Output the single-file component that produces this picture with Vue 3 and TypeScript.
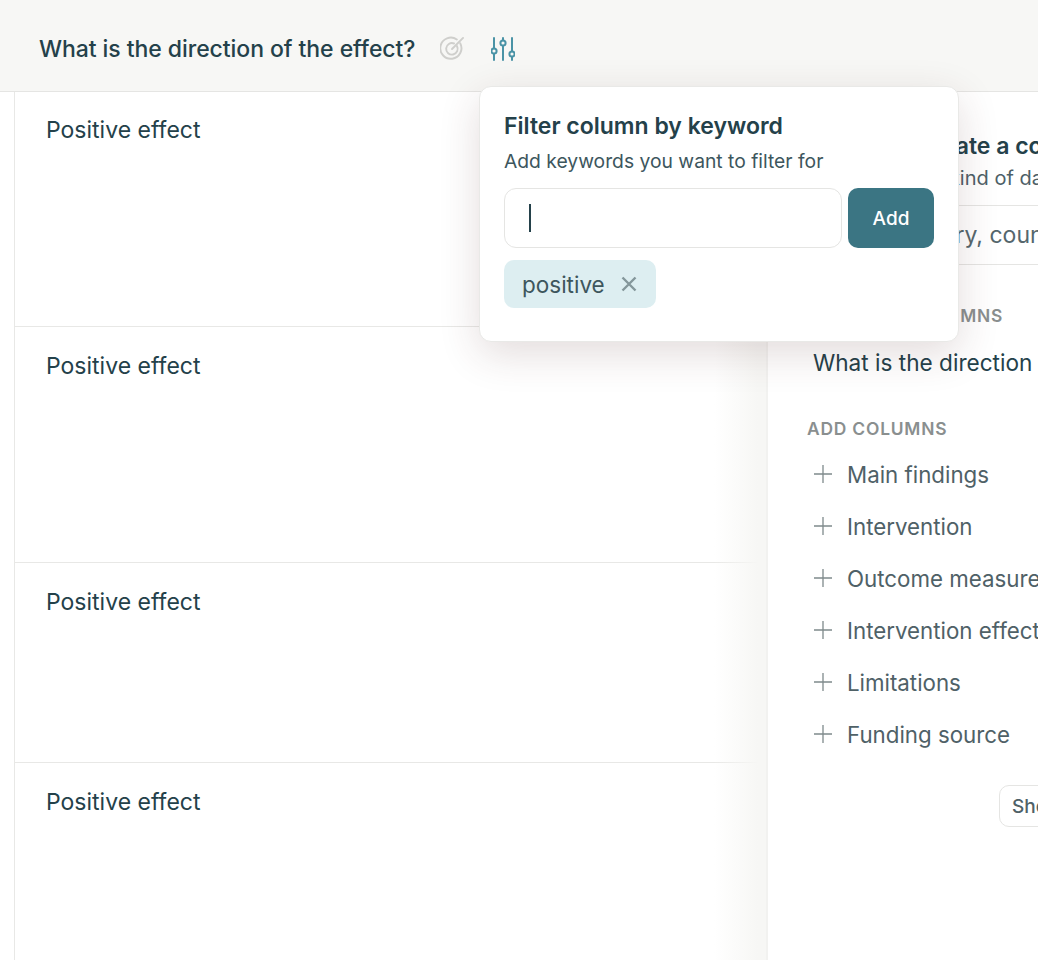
<script setup lang="ts">
const rows = [
  { id: 1, text: 'Positive effect', height: 235 },
  { id: 2, text: 'Positive effect', height: 236 },
  { id: 3, text: 'Positive effect', height: 200 },
  { id: 4, text: 'Positive effect', height: 198 }
]

const addColumns = [
  'Main findings',
  'Intervention',
  'Outcome measured',
  'Intervention effects',
  'Limitations',
  'Funding source'
]
</script>

<template>
  <div class="page">
    <header class="top">
      <span class="top-title">What is the direction of the effect?</span>
      <svg class="icon-target" viewBox="0 0 26 26" fill="none" stroke="#cfcfcc" stroke-width="2" stroke-linecap="round">
        <path d="M21 7.5A11 11 0 1 1 17.5 3.6" />
        <path d="M17.6 10.4a6 6 0 1 1-3-2.6" />
        <path d="M12.5 13.5 24 2" />
      </svg>
      <svg class="icon-sliders" viewBox="0 0 24 24" fill="none" stroke="#4a93a6" stroke-width="2" stroke-linecap="round">
        <path d="M3 1v10M3 17v6M12 1v2M12 9v14M21 1v13M21 20v3" />
        <circle cx="3" cy="14" r="2.6" />
        <circle cx="12" cy="6" r="2.6" />
        <circle cx="21" cy="17" r="2.6" />
      </svg>
    </header>

    <div class="body">
      <section class="table">
        <div v-for="row in rows" :key="row.id" class="cell" :style="{ height: row.height + 'px' }">
          {{ row.text }}
        </div>
      </section>

      <aside class="panel">
        <h3 class="panel-title">Search or create a column</h3>
        <p class="panel-sub">Describe what kind of data</p>
        <div class="panel-input">Study summary, country</div>
        <div class="label active-label">SELECTED COLUMNS</div>
        <div class="active-item">What is the direction of the effect?</div>
        <div class="label add-label">ADD COLUMNS</div>
        <ul class="add-list">
          <li v-for="col in addColumns" :key="col">
            <svg class="plus" viewBox="0 0 18 18" fill="none" stroke="#7f8a8c" stroke-width="1.3">
              <path d="M9 0v18M0 9h18" />
            </svg>
            {{ col }}
          </li>
        </ul>
        <div class="show-row">
          <button class="show-btn">Show more</button>
        </div>
      </aside>
    </div>

    <div class="popover">
      <h4 class="pop-title">Filter column by keyword</h4>
      <p class="pop-sub">Add keywords you want to filter for</p>
      <div class="pop-form">
        <div class="pop-input"><span class="caret"></span></div>
        <button class="pop-add">Add</button>
      </div>
      <div class="chip">
        <span class="chip-text">positive</span>
        <svg class="chip-x" viewBox="0 0 16 16" fill="none" stroke="#84979b" stroke-width="2.4">
          <path d="M1.5 1.5l13 13M14.5 1.5l-13 13" />
        </svg>
      </div>
    </div>
  </div>
</template>

<style scoped>
.page {
  position: relative;
  width: 1038px;
  height: 960px;
  overflow: hidden;
  background: #fff;
  font-family: Inter, 'Liberation Sans', sans-serif;
  color: #24414a;
}

.top {
  display: flex;
  align-items: center;
  height: 92px;
  padding: 6px 0 0 39px;
  box-sizing: border-box;
  background: #f7f7f5;
  border-bottom: 1px solid #e5e5e3;
}

.top-title {
  font-size: 23px;
  font-weight: 500;
  letter-spacing: -0.06px;
  margin-right: 25px;
}

.icon-target {
  width: 25px;
  height: 25px;
  margin-right: 26px;
}

.icon-sliders {
  width: 24px;
  height: 24px;
}

.body {
  display: flex;
}

.table {
  width: 767px;
  flex-shrink: 0;
  padding-left: 14px;
  box-sizing: border-box;
}

.cell {
  box-sizing: border-box;
  border-left: 1px solid #e8e8e6;
  border-bottom: 1px solid #e8e8e6;
  padding: 25px 0 0 31px;
  font-size: 23px;
  line-height: 28px;
}

.cell:first-child {
  padding-top: 24px;
}

.panel {
  flex: 1;
  min-width: 0;
  position: relative;
  height: 868px;
  padding: 40px 0 0 39px;
  box-sizing: border-box;
  white-space: nowrap;
  background: #fff;
  border-left: 2px solid #f2f2f0;
  margin-left: -1px;
}

/* soft fade over the table, next to the panel */
.panel::before {
  content: '';
  position: absolute;
  top: 0;
  bottom: 0;
  left: -54px;
  width: 52px;
  background: linear-gradient(to right, rgba(247, 247, 245, 0), #f7f7f5 85%);
}

.panel-title {
  margin: 0;
  font-size: 23px;
  line-height: 28px;
  font-weight: 600;
}

.panel-sub {
  margin: 4px 0 0;
  font-size: 20px;
  line-height: 28px;
  color: #4d6067;
}

.panel-input {
  margin-top: 13px;
  height: 60px;
  line-height: 58px;
  box-sizing: border-box;
  border-top: 1px solid #e5e5e3;
  border-bottom: 1px solid #e5e5e3;
  font-size: 23px;
  color: #55676d;
}

.label {
  font-size: 17.4px;
  line-height: 22px;
  font-weight: 600;
  letter-spacing: 0.8px;
  color: #8a8f8f;
}

.active-label {
  margin-top: 40px;
}

.active-item {
  margin: 22px 0 0 6px;
  font-size: 22.6px;
  line-height: 28px;
}

.add-label {
  margin-top: 41px;
}

.add-list {
  list-style: none;
  margin: 8px 0 0;
  padding: 0;
}

.add-list li {
  display: flex;
  align-items: center;
  height: 52px;
  font-size: 22.3px;
  color: #4f6167;
  padding-left: 7px;
}

.plus {
  width: 18px;
  height: 18px;
  margin: -1px 15px 0 0;
  flex-shrink: 0;
}

.show-row {
  margin: 25px 0 0 192px;
}

.show-btn {
  height: 42px;
  padding: 0 12px;
  background: #fff;
  border: 1px solid #e5e5e3;
  border-radius: 10px;
  font: 500 19px Inter, 'Liberation Sans', sans-serif;
  color: #4f6167;
}

.popover {
  position: absolute;
  left: 479px;
  top: 86px;
  width: 480px;
  height: 256px;
  box-sizing: border-box;
  padding: 25px 24px 0;
  background: #fff;
  border: 1px solid #e9e9e7;
  border-radius: 12px;
  box-shadow: 0 12px 40px rgba(80, 40, 40, 0.16);
}

.pop-title {
  margin: 0;
  font-size: 23px;
  line-height: 28px;
  font-weight: 600;
}

.pop-sub {
  margin: 9px 0 0;
  font-size: 19.3px;
  line-height: 24px;
  color: #3d565d;
}

.pop-form {
  display: flex;
  gap: 6px;
  margin-top: 15px;
}

.pop-input {
  flex: 1;
  display: flex;
  align-items: center;
  height: 60px;
  box-sizing: border-box;
  padding-left: 24px;
  border: 1px solid #e5e5e3;
  border-radius: 12px;
}

.caret {
  width: 2px;
  height: 28px;
  background: #24414a;
}

.pop-add {
  width: 86px;
  height: 60px;
  border: none;
  border-radius: 10px;
  background: #3b7583;
  color: #fff;
  font: 500 19px Inter, 'Liberation Sans', sans-serif;
}

.chip {
  display: inline-flex;
  align-items: center;
  gap: 16px;
  height: 48px;
  margin-top: 12px;
  padding: 0 19px 0 18px;
  border-radius: 10px;
  background: #ddeef1;
  font-size: 22.5px;
  color: #3d565d;
}

.chip-x {
  width: 16px;
  height: 16px;
}
</style>
